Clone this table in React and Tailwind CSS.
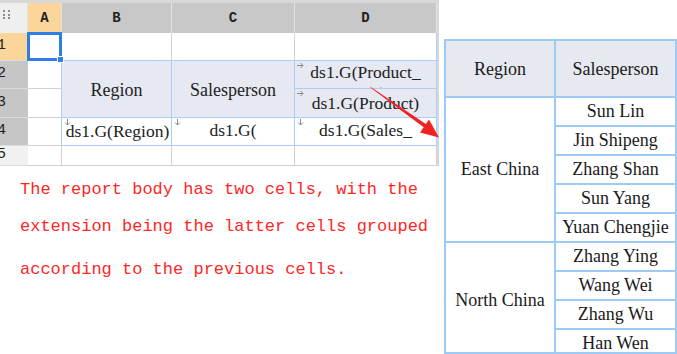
import React from 'react';

const serif = "font-['Liberation_Serif',serif]";
const mono = "font-['Liberation_Mono',monospace]";

// tiny grey direction marks in the corner of report cells
const Mark = ({ dir }) => (
    <svg className="absolute left-[2px] top-[1px]" width="7" height="7" viewBox="0 0 7 7">
        {dir === 'down' ? (
            <path d="M3.5 0 V6 M1 3.5 L3.5 6 L6 3.5" stroke="#8a8a8a" strokeWidth="1" fill="none" />
        ) : (
            <path d="M0 3.5 H6 M3.5 1 L6 3.5 L3.5 6" stroke="#8a8a8a" strokeWidth="1" fill="none" />
        )}
    </svg>
);

const ColHead = ({ label, active }) => (
    <div
        className={`flex items-center justify-center border-r border-[#e2e2e2] ${mono} text-[14px] font-bold text-[#222] ${
            active ? 'bg-[#fcd59b]' : 'bg-[#c8c8c8]'
        }`}
    >
        {label}
    </div>
);

const RowHead = ({ n, tone }) => (
    <div
        className={`flex items-center overflow-hidden border-b border-[#dcdcdc] ${mono} text-[15px] text-[#222] ${
            tone === 'active' ? 'bg-[#fcd59b]' : tone === 'dark' ? 'bg-[#c6c6c6]' : 'bg-[#f1f1f1]'
        }`}
    >
        <span className="-ml-[3px]">{n}</span>
    </div>
);

const Plain = () => <div className="border-r border-b border-[#d2d2d2]" />;

const Spreadsheet = () => (
    <div className="w-[439px] h-[166px] border-t-[3px] border-r-2 border-[#d8d8d8] grid grid-cols-[28px_34px_110px_123px_142px] grid-rows-[30px_28px_28px_29px_28px_20px] overflow-hidden">
        {/* column header row */}
        <div className="bg-[#efefef] border-r border-[#e2e2e2] pl-[3px] pt-[7px]">
            <div className="grid grid-cols-[2px_2px] gap-x-[3px] gap-y-[1.5px] w-fit">
                {[0, 1, 2, 3, 4, 5].map((i) => (
                    <div key={i} className="w-[2px] h-[2px] bg-[#8c8c8c]" />
                ))}
            </div>
        </div>
        <ColHead label="A" active />
        <ColHead label="B" />
        <ColHead label="C" />
        <ColHead label="D" />

        {/* row 1 */}
        <RowHead n="1" tone="active" />
        <div className="relative border-r border-b border-[#d2d2d2]">
            <div className="absolute -left-px -top-px w-[35px] h-[29px] border-[3px] border-[#2f7ee8]" />
            <div className="absolute left-[29px] top-[23px] w-[7px] h-[7px] bg-[#2f7ee8] border border-white" />
        </div>
        <div className="border-r border-[#d2d2d2] border-b border-b-[#a9cff6]" />
        <div className="border-r border-[#d2d2d2] border-b border-b-[#a9cff6]" />
        <div className="border-r border-[#a9cff6] border-b border-b-[#a9cff6]" />

        {/* row 2 */}
        <RowHead n="2" tone="dark" />
        <div className="border-b border-[#d2d2d2] border-r border-r-[#a9cff6]" />
        <div className={`row-span-2 flex items-center justify-center pt-[2px] bg-[#e6e9f2] border-r border-b border-[#a9cff6] ${serif} text-[18px] text-[#222]`}>
            Region
        </div>
        <div className={`row-span-2 flex items-center justify-center pt-[2px] bg-[#e6e9f2] border-r border-b border-[#a9cff6] ${serif} text-[18px] text-[#222]`}>
            Salesperson
        </div>
        <div className={`relative overflow-hidden bg-[#e6e9f2] border-r border-b border-[#a9cff6] pt-[1px] text-center leading-[21px] ${serif} text-[17.5px] text-[#222]`}>
            <Mark dir="right" />
            ds1.G(Product_
            <br />
            Type)
        </div>

        {/* row 3 */}
        <RowHead n="3" tone="dark" />
        <div className="border-b border-[#d2d2d2] border-r border-r-[#a9cff6]" />
        <div className={`relative flex items-center justify-center bg-[#e6e9f2] border-r border-b border-[#a9cff6] ${serif} text-[17.5px] text-[#222]`}>
            <Mark dir="right" />
            ds1.G(Product)
        </div>

        {/* row 4 */}
        <RowHead n="4" tone="dark" />
        <div className="border-b border-[#d2d2d2] border-r border-r-[#a9cff6]" />
        <div className={`relative flex items-center justify-center whitespace-nowrap overflow-hidden border-r border-b border-[#a9cff6] ${serif} text-[17.5px] text-[#222]`}>
            <Mark dir="down" />
            <span className="ml-[2px]">ds1.G(Region)</span>
        </div>
        <div className={`relative overflow-hidden border-r border-b border-[#a9cff6] pt-[2px] text-center leading-[21px] ${serif} text-[17.5px] text-[#222]`}>
            <Mark dir="down" />
            ds1.G(
            <br />
            Salesperson)
        </div>
        <div className={`relative overflow-hidden border-r border-b border-[#a9cff6] pt-[2px] text-center leading-[21px] ${serif} text-[17.5px] text-[#222]`}>
            <Mark dir="down" />
            ds1.G(Sales_
            <br />
            Volume)
        </div>

        {/* row 5 */}
        <RowHead n="5" />
        <Plain />
        <Plain />
        <Plain />
        <Plain />
    </div>
);

const Note = () => (
    <div className={`pl-[20px] ${mono} text-[17px] leading-[20px] text-[#ff2626] whitespace-nowrap`}>
        <div className="mt-[14px]">The report body has two cells, with the</div>
        <div className="mt-[17px]">extension being the latter cells grouped</div>
        <div className="mt-[23px]">according to the previous cells.</div>
    </div>
);

const people = [
    ['Sun Lin', 'Jin Shipeng', 'Zhang Shan', 'Sun Yang', 'Yuan Chengjie'],
    ['Zhang Ying', 'Wang Wei', 'Zhang Wu', 'Han Wen'],
];

const Result = () => (
    <div
        className={`mt-[39px] w-[233px] h-[315px] border-2 border-[#9ecbf6] grid grid-cols-[110px_1fr] grid-rows-[57px_repeat(9,1fr)] ${serif} text-[18px] text-[#1a1a1a]`}
    >
        <div className="flex items-center justify-center pt-[2px] bg-[#e7e9f1] border-r-2 border-b-2 border-[#9ecbf6]">Region</div>
        <div className="flex items-center justify-center pt-[2px] bg-[#e7e9f1] border-b-2 border-[#9ecbf6]">Salesperson</div>

        <div className="row-span-5 flex items-center justify-center border-r-2 border-b-2 border-[#9ecbf6]">East China</div>
        {people[0].map((p) => (
            <div key={p} className="flex items-center justify-center border-b-2 border-[#9ecbf6]">
                {p}
            </div>
        ))}

        <div className="row-span-4 flex items-center justify-center border-r-2 border-[#9ecbf6]">North China</div>
        {people[1].map((p, i) => (
            <div
                key={p}
                className={`flex items-center justify-center border-[#9ecbf6] ${i < 3 ? 'border-b-2' : ''}`}
            >
                {p}
            </div>
        ))}
    </div>
);

export default function App() {
    return (
        <div className="relative w-[677px] h-[354px] bg-white overflow-hidden flex">
            <div className="w-[444px] flex flex-col">
                <Spreadsheet />
                <Note />
            </div>
            <Result />

            {/* red pointer from the report cells to the result */}
            <svg className="absolute left-0 top-0 pointer-events-none" width="677" height="354" viewBox="0 0 677 354">
                <polygon points="370,86.5 371,88 426,129 428,125.5" fill="#f02222" />
                <polygon points="439,137.5 420,132.5 429,119.5" fill="#f02222" />
            </svg>
        </div>
    );
}
